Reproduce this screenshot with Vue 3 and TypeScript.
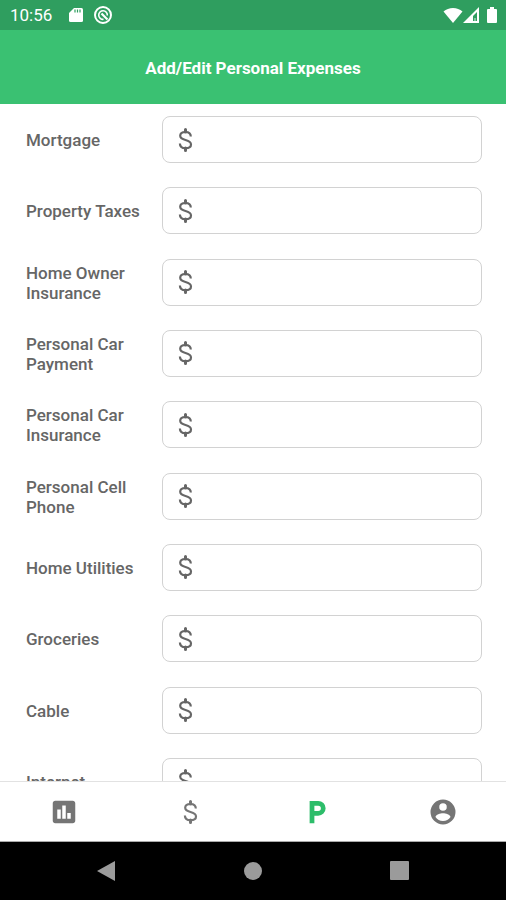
<script setup lang="ts">
import { ref } from 'vue'

interface Expense {
  id: string
  label: string
  amount: string
}

const names: string[] = [
  'Mortgage',
  'Property Taxes',
  'Home Owner Insurance',
  'Personal Car Payment',
  'Personal Car Insurance',
  'Personal Cell Phone',
  'Home Utilities',
  'Groceries',
  'Cable',
  'Internet',
]

const expenses = ref<Expense[]>(
  names.map((label) => ({
    id: label.toLowerCase().replace(/ /g, '-'),
    label,
    amount: '',
  })),
)
</script>

<template>
  <div class="screen">
    <div class="status">
      <span class="clock">10:56</span>
      <svg class="sd" viewBox="0 0 14 16" aria-hidden="true">
        <path fill="#fff" d="M5 1h7.500q1.500 0 1.500 1.500v11q0 1.500-1.500 1.500h-11Q0 15 0 13.500V6z" />
        <path stroke="#2f9e5f" stroke-width="1.200" d="M6 2.500v3M8.500 2.500v3M11 2.500v3" />
      </svg>
      <svg class="sync" viewBox="0 0 20 20" fill="none" stroke="#fff" aria-hidden="true">
        <circle cx="10" cy="10" r="8" stroke-width="2" />
        <path stroke-width="1.600" d="M10.500 14.300A4.300 4.300 0 1 1 14.300 10.500" />
        <path stroke-width="2.200" d="M8.500 8.500l6 6" />
      </svg>
      <span class="spacer"></span>
      <svg class="wifi" viewBox="0 0 20 16" fill="#fff" aria-hidden="true">
        <path d="M10 16 .500 4.500Q4.500 1 10 1t9.500 3.500z" />
      </svg>
      <svg class="signal" viewBox="0 0 16 16" aria-hidden="true">
        <path fill="#fff" fill-rule="evenodd" d="M16 0v16H0zM14 5l-4 4v5h4z" />
        <path fill="#fff" d="M11 11h2v3h-2z" opacity=".4" />
      </svg>
      <svg class="battery" viewBox="0 0 10 16" fill="#fff" aria-hidden="true">
        <path d="M3 0h4v2h2q1 0 1 1v12q0 1-1 1H1q-1 0-1-1V3q0-1 1-1h2z" />
      </svg>
    </div>

    <header class="header">
      <h1>Add/Edit Personal Expenses</h1>
    </header>

    <main class="content">
      <form class="list" @submit.prevent>
        <div v-for="item in expenses" :key="item.id" class="row">
          <label :for="item.id">{{ item.label }}</label>
          <div class="field">
            <svg class="dollar" viewBox="0 0 30 30" aria-hidden="true">
              <path class="curve" d="M20.800 11.600C20.800 8.800 18.700 7 15.500 7 12.300 7 10.200 8.600 10.200 10.800c0 2.400 1.900 3.300 5.300 4.200s5.500 2 5.500 4.400c0 2.200-2.200 3.700-5.500 3.700s-5.600-1.800-5.600-4.700" />
              <path class="stub" d="M15.500 4.500V7M15.500 23v2.500" />
            </svg>
            <input :id="item.id" v-model="item.amount" type="text" inputmode="decimal" />
          </div>
        </div>
      </form>
    </main>

    <nav class="tabs">
      <button type="button" aria-label="Reports">
        <svg viewBox="0 0 24 24" aria-hidden="true">
          <path fill-rule="evenodd" d="M19 3H5c-1.100 0-2 .900-2 2v14c0 1.100.900 2 2 2h14c1.100 0 2-.900 2-2V5c0-1.100-.900-2-2-2zM9.400 17.400H6.600V10h2.800zm4 0h-2.800V6.800h2.800zm4 0h-2.800v-4.600h2.800z" />
        </svg>
      </button>
      <button type="button" aria-label="Expenses">
        <svg class="dollar" viewBox="0 0 30 30" aria-hidden="true">
          <path class="curve" d="M20.800 11.600C20.800 8.800 18.700 7 15.500 7 12.300 7 10.200 8.600 10.200 10.800c0 2.400 1.900 3.300 5.300 4.200s5.500 2 5.500 4.400c0 2.200-2.200 3.700-5.500 3.700s-5.600-1.800-5.600-4.700" />
          <path class="stub" d="M15.500 4.500V7M15.500 23v2.500" />
        </svg>
      </button>
      <button type="button" class="active" aria-label="Personal" aria-current="page">
        <svg viewBox="0 0 24 24" aria-hidden="true">
          <path fill="none" stroke="currentColor" stroke-width="3.800" d="M8 21V5h5a4 4 0 0 1 0 8H8" />
        </svg>
      </button>
      <button type="button" aria-label="Account">
        <svg viewBox="0 0 24 24" aria-hidden="true">
          <path fill-rule="evenodd" d="M12 2a10 10 0 1 0 0 20 10 10 0 0 0 0-20zm0 3a3 3 0 1 1 0 6 3 3 0 0 1 0-6zm0 14.200a7.200 7.200 0 0 1-6-3.220c.030-1.990 4-3.080 6-3.080s5.970 1.090 6 3.080a7.200 7.200 0 0 1-6 3.220z" />
        </svg>
      </button>
    </nav>

    <div class="system">
      <button type="button" aria-label="Back">
        <svg viewBox="0 0 20 20" aria-hidden="true"><path d="M1 10 19 0v20z" /></svg>
      </button>
      <button type="button" aria-label="Home">
        <svg viewBox="0 0 20 20" aria-hidden="true"><circle cx="10" cy="10" r="9" /></svg>
      </button>
      <button type="button" aria-label="Overview">
        <svg viewBox="0 0 20 20" aria-hidden="true"><rect x="0" y="0" width="19" height="19" rx="1" /></svg>
      </button>
    </div>
  </div>
</template>

<style>
body {
  margin: 0;
}
</style>

<style scoped>
.screen {
  display: flex;
  flex-direction: column;
  height: 100vh;
  background: #fff;
  color: #666;
  font-family: Roboto, "Liberation Sans", sans-serif;
}

button {
  display: flex;
  align-items: center;
  justify-content: center;
  margin: 0;
  padding: 0;
  border: 0;
  background: none;
  color: inherit;
}

.status {
  display: flex;
  flex: none;
  align-items: center;
  box-sizing: border-box;
  height: 30px;
  padding: 0 9px 0 10px;
  background: #2f9e5f;
  color: #fff;
}

.clock {
  margin-right: 17px;
  font-size: 17px;
  line-height: 20px;
}

.sd {
  width: 14px;
  height: 16px;
  margin-right: 10px;
}

.sync {
  width: 20px;
  height: 20px;
}

.spacer {
  flex: 1;
}

.wifi {
  width: 20px;
  height: 16px;
}

.signal {
  width: 16px;
  height: 16px;
  margin-right: 8px;
}

.battery {
  width: 10px;
  height: 16px;
}

.header {
  display: flex;
  flex: none;
  align-items: center;
  justify-content: center;
  box-sizing: border-box;
  height: 74px;
  padding-top: 2px;
  background: #3ac172;
  color: #fff;
}

h1 {
  margin: 0;
  font-size: 17px;
  font-weight: 700;
  line-height: 20px;
}

.content {
  flex: 1;
  min-height: 0;
  overflow: hidden;
}

.list {
  display: flex;
  flex-direction: column;
  justify-content: space-between;
  min-height: 689px;
  padding: 12px 24px 24px 26px;
}

.row {
  display: grid;
  grid-template-columns: 120px 1fr;
  align-items: center;
  column-gap: 16px;
}

label {
  padding-top: 1px;
  font-size: 17px;
  font-weight: 500;
  line-height: 20px;
}

.field {
  display: flex;
  align-items: center;
  box-sizing: border-box;
  height: 47px;
  padding: 0 7px;
  border: 1px solid #d2d2d2;
  border-radius: 8px;
}

.dollar {
  flex: none;
  width: 30px;
  height: 30px;
}

.dollar path {
  fill: none;
  stroke: currentColor;
}

.dollar .curve {
  stroke-width: 2.2;
}

.dollar .stub {
  stroke-width: 3;
  stroke-linecap: round;
}

input {
  flex: 1;
  min-width: 0;
  height: 40px;
  padding: 0 8px;
  border: 0;
  outline: 0;
  background: none;
  color: inherit;
  font: inherit;
}

.tabs {
  display: grid;
  flex: none;
  grid-template-columns: repeat(4, 1fr);
  height: 59px;
  padding-left: 1px;
  border-top: 1px solid #e2e2e2;
  border-bottom: 1px solid #aaa;
  color: #757575;
}

.tabs svg {
  width: 30px;
  height: 30px;
  fill: currentColor;
}

.tabs .active {
  color: #2dbd6a;
}

.system {
  display: grid;
  flex: none;
  grid-template-columns: repeat(3, 1fr);
  height: 58px;
  padding: 0 32px;
  background: #000;
  color: #9b9b9b;
}

.system svg {
  width: 20px;
  height: 20px;
  fill: currentColor;
}
</style>
